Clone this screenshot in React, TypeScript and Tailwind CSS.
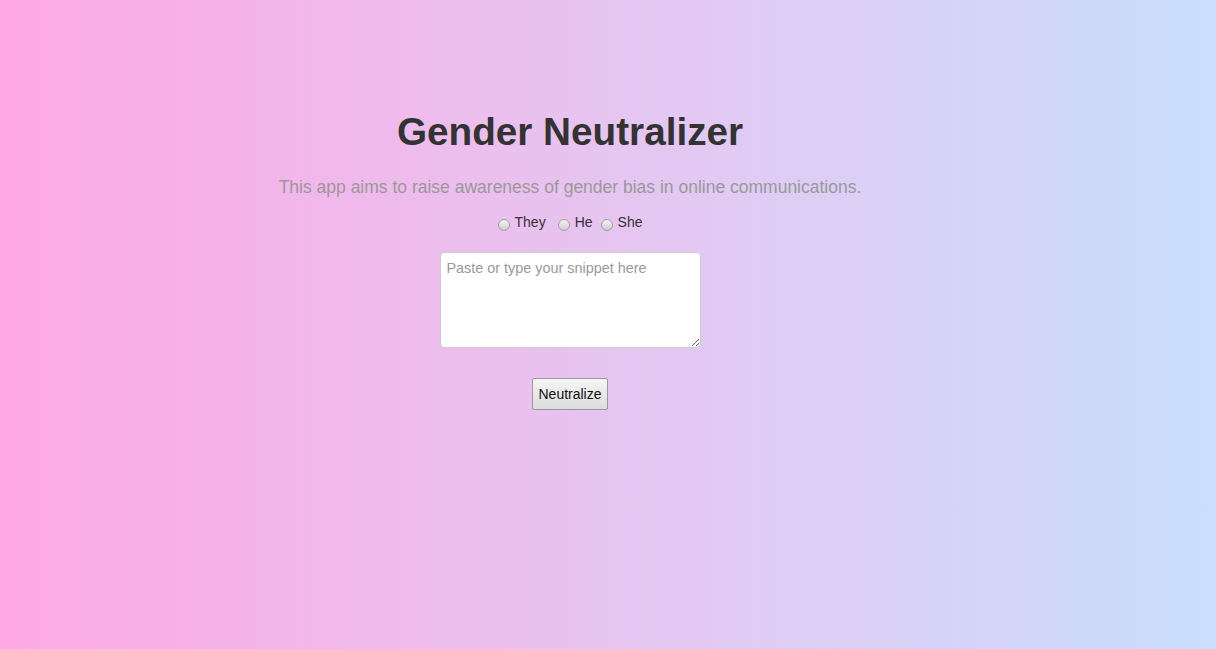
export default function App() {
  const radios = [
    { id: 'they', label: 'They', gap: 'mr-[12px]' },
    { id: 'he', label: 'He', gap: 'mr-[8px]' },
    { id: 'she', label: 'She', gap: '' },
  ];

  return (
    <div className="min-h-[649px] w-full bg-gradient-to-r from-[#fda8e4] to-[#c8dffd] font-['Liberation_Sans',Arial,sans-serif]">
      <div className="w-[1140px] flex flex-col items-center pt-[109px]">
        {/* Header */}
        <h1 className="text-[38.7px] leading-[46px] font-bold text-[#333333]">Gender Neutralizer</h1>
        <p className="mt-[20px] text-[17.5px] leading-[24px] text-[#999999]">
          This app aims to raise awareness of gender bias in online communications.
        </p>

        {/* Pronoun choice */}
        <div className="mt-[13px] flex items-center text-[14px] leading-[20px] text-[#333333]">
          {radios.map((r) => (
            <label key={r.id} className={`flex items-center ${r.gap}`}>
              <input
                type="radio"
                name="pronoun"
                className="appearance-none w-[12px] h-[12px] mt-[6px] mr-[5px] rounded-full border border-[#a0a0a0] bg-gradient-to-b from-[#f2f2f2] to-[#cfcfcf]"
              />
              <span>{r.label}</span>
            </label>
          ))}
        </div>

        {/* Snippet */}
        <textarea
          placeholder="Paste or type your snippet here"
          className="mt-[20px] w-[261px] h-[96px] rounded-[4px] border border-[#cccccc] bg-white px-[6px] py-[5px] text-[14.4px] leading-[20px] text-[#555555] placeholder:text-[#999999] outline-none"
        />

        <button className="mt-[30px] h-[32px] px-[5px] border border-[#9a9a9a] rounded-[2px] bg-gradient-to-b from-[#f5f5f5] to-[#dcdcdc] text-[14px] text-[#111111]">
          Neutralize
        </button>
      </div>
    </div>
  );
}
